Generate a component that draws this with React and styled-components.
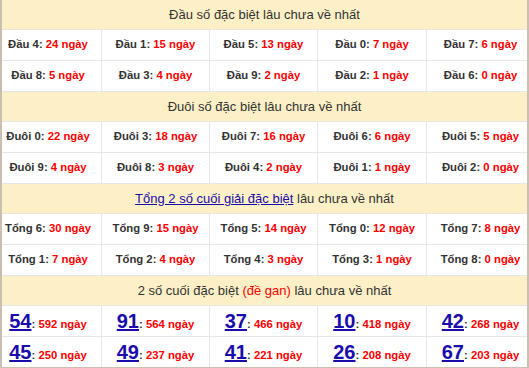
import React from "react";
import styled, { createGlobalStyle } from "styled-components";

const Global = createGlobalStyle`
  html, body { margin: 0; padding: 0; background: #fff; }
  body { font-family: "Liberation Sans", Arial, sans-serif; }
`;

const Frame = styled.div`
  width: 529px;
  box-sizing: border-box;
  border: 2px solid #cbbfb1;
  border-top: none;
  background: #fff;
`;

const Section = styled.section`
  display: flex;
  flex-direction: column;
  & + & { border-top: 1px solid #e6e6e6; }
`;

const Header = styled.div`
  height: 29px;
  display: flex;
  align-items: center;
  justify-content: center;
  background: #fdf0c7;
  border-bottom: 1px solid #e6e6e6;
  font-size: 13px;
  color: #333;
`;

const HeadLink = styled.a`
  color: #1a0cab;
  text-decoration: underline;
`;

const Red = styled.span`
  color: #f00;
`;

const Grid = styled.div`
  display: grid;
  grid-template-columns: 99px 107px 107px 108px 1fr;
  grid-auto-rows: 30px;
  gap: 1px;
  background: #e6e6e6;
`;

const Cell = styled.div`
  background: #fff;
  display: flex;
  align-items: center;
  justify-content: center;
  font-size: 11.3px;
  font-weight: bold;
  color: #333;
  white-space: nowrap;
  &:nth-child(5n + 1) { padding-right: 7px; }
  &:nth-child(5n) { padding-left: 7px; }
`;

const Days = styled.span`
  color: #f00;
`;

const Line = styled.span`
  line-height: 1;
`;

const Big = styled.a`
  color: #1a0cab;
  font-size: 20px;
  font-weight: bold;
  text-decoration: underline;
`;

const dau = [
  ["Đầu 4", 24], ["Đầu 1", 15], ["Đầu 5", 13], ["Đầu 0", 7], ["Đầu 7", 6],
  ["Đầu 8", 5], ["Đầu 3", 4], ["Đầu 9", 2], ["Đầu 2", 1], ["Đầu 6", 0],
];
const duoi = [
  ["Đuôi 0", 22], ["Đuôi 3", 18], ["Đuôi 7", 16], ["Đuôi 6", 6], ["Đuôi 5", 5],
  ["Đuôi 9", 4], ["Đuôi 8", 3], ["Đuôi 4", 2], ["Đuôi 1", 1], ["Đuôi 2", 0],
];
const tong = [
  ["Tổng 6", 30], ["Tổng 9", 15], ["Tổng 5", 14], ["Tổng 0", 12], ["Tổng 7", 8],
  ["Tổng 1", 7], ["Tổng 2", 4], ["Tổng 4", 3], ["Tổng 3", 1], ["Tổng 8", 0],
];
const gan = [
  ["54", 592], ["91", 564], ["37", 466], ["10", 418], ["42", 268],
  ["45", 250], ["49", 237], ["41", 221], ["26", 208], ["67", 203],
];

function StatGrid({ items }) {
  return (
    <Grid>
      {items.map(([label, n]) => (
        <Cell key={label}>
          <Line>
            {label}: <Days>{n} ngày</Days>
          </Line>
        </Cell>
      ))}
    </Grid>
  );
}

export default function App() {
  return (
    <>
      <Global />
      <Frame>
        <Section>
          <Header>Đầu số đặc biệt lâu chưa về nhất</Header>
          <StatGrid items={dau} />
        </Section>
        <Section>
          <Header>Đuôi số đặc biệt lâu chưa về nhất</Header>
          <StatGrid items={duoi} />
        </Section>
        <Section>
          <Header>
            <HeadLink href="#">Tổng 2 số cuối giải đặc biệt</HeadLink>&nbsp;lâu chưa về nhất
          </Header>
          <StatGrid items={tong} />
        </Section>
        <Section>
          <Header>
            2 số cuối đặc biệt&nbsp;<Red>(đề gan)</Red>&nbsp;lâu chưa về nhất
          </Header>
          <Grid>
            {gan.map(([num, n]) => (
              <Cell key={num}>
                <Line>
                  <Big href="#">{num}</Big>: <Days>{n} ngày</Days>
                </Line>
              </Cell>
            ))}
          </Grid>
        </Section>
      </Frame>
    </>
  );
}
